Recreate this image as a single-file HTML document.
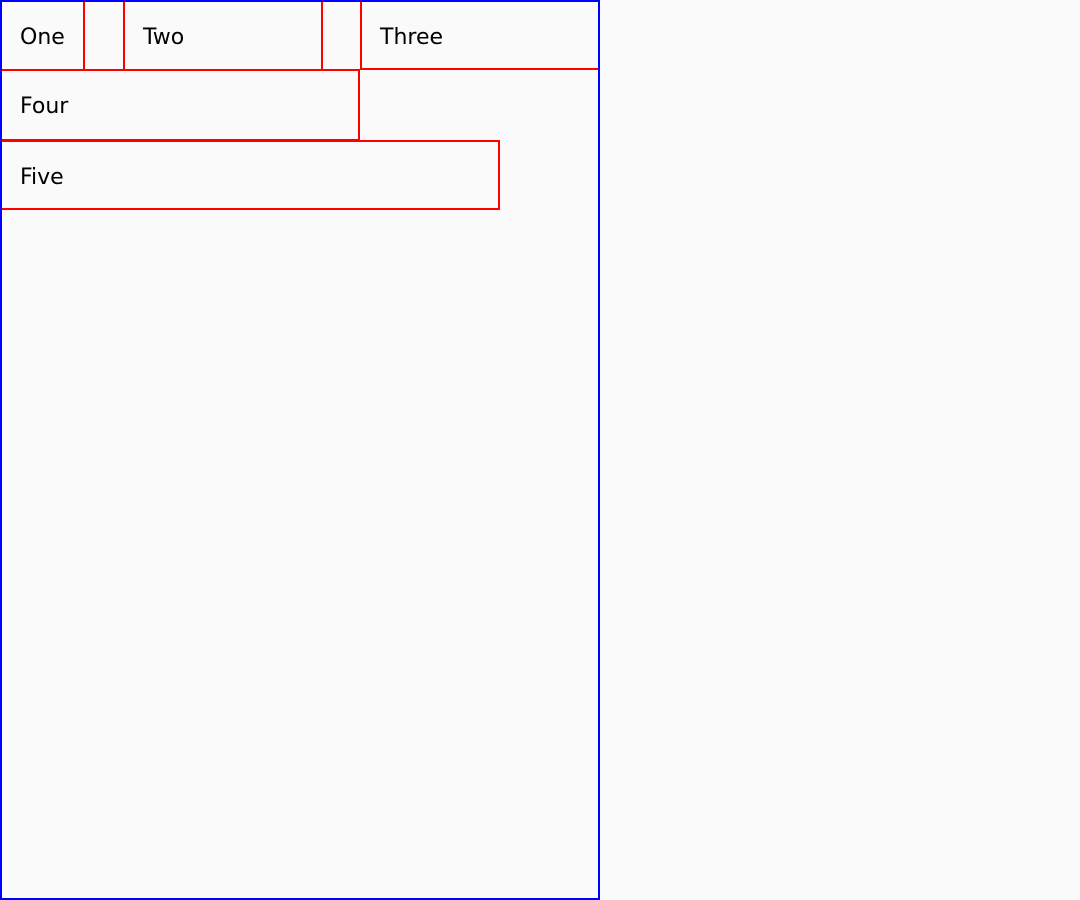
<!DOCTYPE html>
<html><head><style>
html,body{margin:0;padding:0;background:#fafafa;width:1080px;height:900px;overflow:hidden}
.c{position:absolute;left:0;top:0;width:600px;height:900px;box-sizing:border-box;border:2px solid #0000ff;z-index:5}
.b{position:absolute;box-sizing:border-box;border:2px solid #ff0000;font:22px "DejaVu Sans","Liberation Sans",sans-serif;color:#000;padding-left:18px;line-height:72px}
</style></head><body>
<div class="b" style="left:0;top:0;width:85px;height:71px">One</div>
<div class="b" style="left:123px;top:0;width:200px;height:71px">Two</div>
<div class="b" style="left:360px;top:0;width:240px;height:70px">Three</div>
<div class="b" style="left:0;top:69px;width:360px;height:72px">Four</div>
<div class="b" style="left:0;top:140px;width:500px;height:70px">Five</div>
<div class="c"></div>
</body></html>
